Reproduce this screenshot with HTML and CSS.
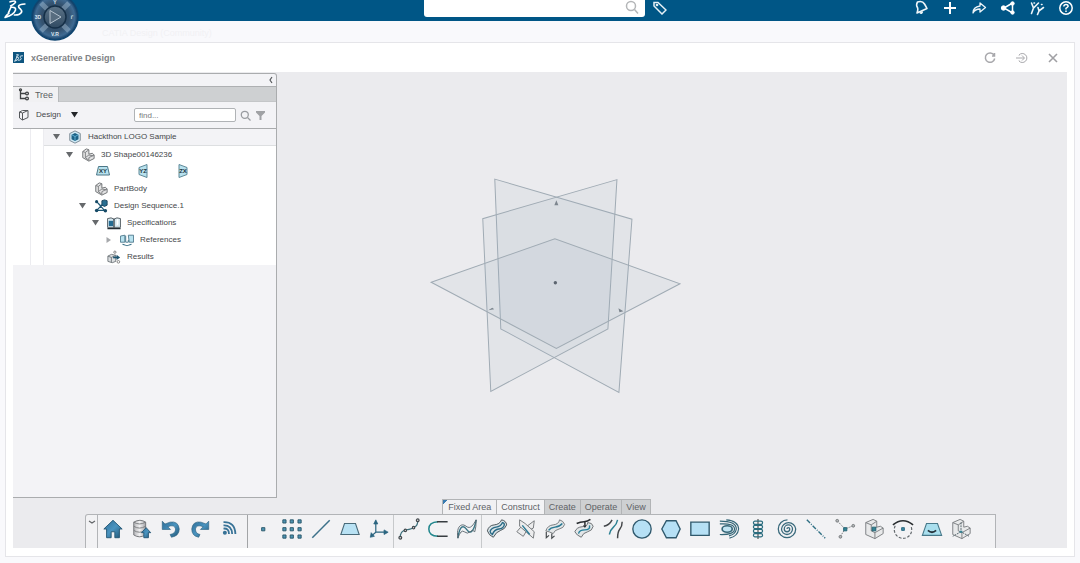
FILE: index.html
```html
<!DOCTYPE html>
<html lang="en">
<head>
<meta charset="utf-8">
<meta name="viewport" content="width=device-width, initial-scale=1">
<title>xGenerative Design</title>
<link rel="stylesheet" href="styles.css">
</head>
<body>
<svg class="defs" aria-hidden="true">
  <defs>
    <linearGradient id="blue" x1="0" y1="0" x2="1" y2="1"><stop offset="0" stop-color="#2f6d96"/><stop offset=".5" stop-color="#4a94c0"/><stop offset="1" stop-color="#1f5474"/></linearGradient>
    <linearGradient id="grey" x1="0" y1="0" x2="1" y2="0"><stop offset="0" stop-color="#b5b5b8"/><stop offset=".5" stop-color="#f2f2f3"/><stop offset="1" stop-color="#a2a2a6"/></linearGradient>
    <radialGradient id="dial" cx=".5" cy=".5" r=".5"><stop offset="0" stop-color="#2f4a64"/><stop offset=".6" stop-color="#34526f"/><stop offset=".85" stop-color="#3f6a92"/><stop offset="1" stop-color="#0f3b63"/></radialGradient>
    <linearGradient id="knob" x1="0" y1="0" x2="0" y2="1"><stop offset="0" stop-color="#5d7488"/><stop offset="1" stop-color="#304a62"/></linearGradient>
    <g id="ds" fill="none" stroke-linecap="round" stroke-linejoin="round">
      <path d="M5.500 1.500q5-1.500 5 .2q-.5 1.500-4.500 3.500"/>
      <path d="M6.500 6l-2.500 5.500M6.500 6.500q4.500-.5 4 2.500q-1.500 4.500-9.500 6.800q1.500-2.500 3.500-4"/>
      <path d="M19 3.500q-5 0-5.800 2q-.2 1.300 1.900 2.800q1.700 1.700.5 3.200q-1.600 2.200-6.100 2"/>
    </g>
    <g id="part">
      <path d="M2 4l4-3 3 1v5l4-1 2 2v4l-6 3-7-4z" fill="#e3e3e4" stroke="#66696c"/>
      <path d="M2 4l3 1v6l4 3M5 5l4-3M5 11l4-3 5 1M9 14v-3l6-3" fill="none" stroke="#77797c"/>
    </g>
    <path id="down" d="M0 0h7L3.500 5.500z"/>
  </defs>
</svg>

<header class="topbar">
  <div class="brand">
    <a class="logo" href="#" aria-label="3DS home"><svg width="22" height="19" viewBox="0 0 20 17" stroke="#fff" stroke-width="1.500"><use href="#ds"/></svg></a>
    <button class="compass" aria-label="Compass">
      <svg width="48" height="48" viewBox="0 0 48 48">
        <circle cx="24" cy="24" r="23" fill="url(#dial)" stroke="#0f4570" stroke-width="1.500"/>
        <path d="M10 10l7 7M38 10l-7 7M10 38l7-7M38 38l-7-7" stroke="#a8c1d6" stroke-width="5" opacity=".45"/>
        <circle cx="24" cy="24" r="11" fill="url(#knob)" stroke="#152f47" stroke-width="1.500"/>
        <path d="M19 17.500v13l11-6.500z" fill="#586d80" stroke="#b5c3cf"/>
        <text x="24" y="11" class="dial-text">Y</text><text x="7" y="26" class="dial-text">3D</text><text x="41" y="26" class="dial-text">i'</text><text x="24" y="43" class="dial-text">V.R</text>
      </svg>
    </button>
  </div>
  <form class="search">
    <input type="search" aria-label="Search">
    <button type="button" aria-label="Run search"><svg width="14" height="15" viewBox="0 0 14 15" fill="none" stroke="#b4b6b8" stroke-width="1.500"><circle cx="6" cy="6" r="4.500"/><path d="M9.500 9.500l3.500 4"/></svg></button>
  </form>
  <nav class="actions" aria-label="Platform">
    <button class="tag" aria-label="Tags"><svg width="14" height="14" viewBox="0 0 14 14" fill="none" stroke="#e6f0f6" stroke-width="1.500"><path d="M1 5V1.500h4l8 7.500-4 4z"/><circle cx="4" cy="4" r=".6"/></svg></button>
    <button aria-label="Notifications"><svg width="16" height="16" viewBox="0 0 16 16" fill="none" stroke="#eef5f9" stroke-width="1.600" stroke-linejoin="round"><path d="M4.500 2q5-1.500 7 2T14 8.500L4 13Q5.500 9 4.200 7T4.500 2z"/><path d="M7 12.500q1.500 2 2.500-1" fill="#eef5f9"/></svg></button>
    <button aria-label="Add"><svg width="16" height="16" viewBox="0 0 16 16" stroke="#fff" stroke-width="2"><path d="M8 2v12M2 8h12"/></svg></button>
    <button aria-label="Share"><svg width="16" height="16" viewBox="0 0 16 16" fill="none" stroke="#eef5f9" stroke-width="1.300" stroke-linejoin="round"><path d="M9 6V3l5.500 4.500L9 12V9Q4 9 2 13 2 7 9 6z"/></svg></button>
    <button aria-label="Network"><svg width="16" height="16" viewBox="0 0 16 16" fill="#fff" stroke="#fff"><path d="M12.500 3L4 8l8.500 5z" fill="none" stroke-width="1.500"/><circle cx="3.500" cy="8" r="2.200"/><circle cx="12.500" cy="3.500" r="1.700"/><circle cx="12.500" cy="12.500" r="1.700"/></svg></button>
    <button aria-label="Communities"><svg width="16" height="16" viewBox="0 0 16 16" fill="none" stroke="#eef5f9" stroke-width="1.600" stroke-linecap="round"><path d="M2.500 3l2 5 5-5M4.500 8l-2 5.500M5 3h.5M9 7.500l1 3.500 4.500-3.500M10 11l-1.500 3.500M12.500 4.500h.5"/></svg></button>
    <button aria-label="Help"><svg width="16" height="16" viewBox="0 0 16 16" fill="none" stroke="#fff" stroke-width="1.500"><circle cx="8" cy="8" r="6.200"/><path d="M5.800 6.500Q6 4.500 8 4.500t2.200 1.700Q10 7.200 8 8.300v1.200M8 10.500v1.500"/></svg></button>
  </nav>
</header>

<p class="dashboard">CATIA Design (Community)</p>

<main class="widget">
  <div class="widget-head">
    <span class="app-icon"><svg width="9" height="8" viewBox="0 0 20 17" stroke="#e4f0f7" stroke-width="2"><use href="#ds"/></svg></span>
    <h1>xGenerative Design</h1>
    <div class="window-tools">
      <button aria-label="Refresh"><svg width="14" height="14" viewBox="0 0 14 14" fill="none" stroke="#a8a8ac" stroke-width="1.500"><path d="M11 4A4.700 4.700 0 1 0 11.700 7.500M11.500 2v3H9"/></svg></button>
      <button aria-label="Open"><svg width="14" height="14" viewBox="0 0 14 14" fill="none" stroke="#a8a8ac" stroke-width="1"><path d="M4 4.500V4a4.500 4.500 0 1 1 0 6v-.5M1 7h8M7 4.500L9.500 7 7 9.500"/></svg></button>
      <button aria-label="Close"><svg width="14" height="14" viewBox="0 0 14 14" stroke="#a0a0a4" stroke-width="1.600"><path d="M3 3l8 8M11 3l-8 8"/></svg></button>
    </div>
  </div>

  <div class="workspace">
    <div class="stage">
      <aside class="panel">
        <div class="panel-top"><button aria-label="Collapse panel"><svg width="6" height="8" viewBox="0 0 6 8" fill="none" stroke="#55585b" stroke-width="1.200"><path d="M4 1L2 4l2 3"/></svg></button></div>
        <div class="panel-tabs">
          <button class="panel-tab"><svg width="12" height="13" viewBox="0 0 12 13" fill="none" stroke="#3f4244" stroke-width="1.300"><path d="M2.500 2v8.500h5M2.500 5.500h5"/><circle cx="2.500" cy="1.800" r="1"/><circle cx="9" cy="5.500" r="1.400"/><circle cx="9" cy="10.500" r="1.400"/></svg>Tree</button>
        </div>
        <div class="filter">
          <svg width="12" height="12" viewBox="0 0 12 12" fill="none" stroke="#55585b" stroke-width="1"><path d="M1.500 3L4.500 4v7L1.500 9zM1.500 3l3-1.500H10L4.500 4M4.500 11L10 8.500v-7"/></svg>
          <select aria-label="View"><option>Design</option></select>
          <svg class="caret" width="7" height="6" viewBox="0 0 7 6" fill="#222528"><use href="#down"/></svg>
          <input type="text" placeholder="find..." aria-label="Find">
          <button aria-label="Find in tree"><svg width="11" height="11" viewBox="0 0 11 11" fill="none" stroke="#999ca0" stroke-width="1.300"><circle cx="4.800" cy="4.800" r="3.500"/><path d="M7.500 7.500l3 3"/></svg></button>
          <button aria-label="Filter"><svg width="9" height="9" viewBox="0 0 9 9" fill="#a0a2a5"><path d="M0 0h9v1.500L5.500 5v4h-2V5L0 1.500z"/></svg></button>
        </div>
        <div class="tree">
          <ul class="root">
            <li>
              <div class="row selected"><button class="twist" aria-label="Collapse"><svg viewBox="0 0 7 6"><use href="#down"/></svg></button><svg class="node" viewBox="0 0 16 16"><path d="M8 1l6 3v8l-6 3-6-3V4z" fill="#cfe9f5" stroke="#72818b"/><path d="M8 3.500l4 2v5l-4 2-4-2v-5z" fill="#1d6286"/><path d="M4.500 5.500L8 7.500l3.500-2M8 7.500v4.500" fill="none" stroke="#67b8dc"/></svg><span>Hackthon LOGO Sample</span></div>
              <ul>
                <li>
                  <div class="row"><button class="twist" aria-label="Collapse"><svg viewBox="0 0 7 6"><use href="#down"/></svg></button><svg class="node" viewBox="0 0 16 16"><use href="#part"/></svg><span>3D Shape00146236</span></div>
                  <div class="planes">
                    <svg width="14" height="16" viewBox="0 0 14 16"><path d="M2.500 3.500h9L13.500 12H.5z" fill="#b7e1ee" stroke="#4c7787"/><text x="7" y="10">XY</text></svg>
                    <svg width="14" height="16" viewBox="0 0 14 16"><path d="M3 4.500l8-3v13l-8-3z" fill="#b7e1ee" stroke="#5e8998"/><text x="7" y="10">YZ</text></svg>
                    <svg width="14" height="16" viewBox="0 0 14 16"><path d="M3 1.500l8 3v7l-8 3z" fill="#b7e1ee" stroke="#5e8998"/><text x="7" y="10">ZX</text></svg>
                  </div>
                  <ul>
                    <li><div class="row"><span class="twist"></span><svg class="node" viewBox="0 0 16 16"><use href="#part"/></svg><span>PartBody</span></div></li>
                    <li>
                      <div class="row"><button class="twist" aria-label="Collapse"><svg viewBox="0 0 7 6"><use href="#down"/></svg></button><svg class="node" viewBox="0 0 16 16"><path d="M3 3l5 5-5 5h9zM8 8l3-3" fill="none" stroke="#1e5876" stroke-width="1.300"/><path d="M9 2l3-1 3 1v5l-3 1.500L9 7z" fill="#2a6f92" stroke="#174059"/><g fill="#174a66"><circle cx="3" cy="3" r="1.800"/><circle cx="3" cy="13" r="2"/><circle cx="13" cy="13.500" r="2"/></g></svg><span>Design Sequence.1</span></div>
                      <ul>
                        <li>
                          <div class="row"><button class="twist" aria-label="Collapse"><svg viewBox="0 0 7 6"><use href="#down"/></svg></button><svg class="node" viewBox="0 0 16 16"><path d="M.5 3Q5 1 8 3.500 11 1 15.500 3v10H.500z" fill="#d4e6ee" stroke="#4a5258"/><path d="M2 5.500h5v6H2z" fill="#256b91"/><path d="M8 3.500V13M.5 14.500h15" stroke="#222b32" stroke-width="1.300"/><path d="M11 4v7l2-1.500V3" fill="#fff"/></svg><span>Specifications</span></div>
                          <ul>
                            <li><div class="row"><button class="twist closed" aria-label="Expand"><svg viewBox="0 0 7 6"><path d="M1.500 0v6L6 3z"/></svg></button><svg class="node" viewBox="0 0 16 16"><path d="M.5 3.500l5-1v8h-5zM9.500 2.500h6v8h-5z" fill="#b8e2ef" stroke="#497588"/><path d="M6.500 3v7.500h3V8M3 13q5 3 10 0l-2 .2M3 13l2 .2" fill="none" stroke="#397087"/></svg><span>References</span></div></li>
                          </ul>
                        </li>
                        <li><div class="row"><span class="twist"></span><svg class="node" viewBox="0 0 16 16"><path d="M1 7l4-2 5 1v7l-4 1.500L1 13z" fill="#dcdfe1" stroke="#6d7478"/><path d="M1 7l4 1.500L10 6M5 8.500V14" fill="none" stroke="#6d7478"/><path d="M7 8.500h5" stroke="#1d546f" stroke-width="2"/><path d="M11 5.500l4 3-4 3z" fill="#1d546f"/><circle cx="9" cy="2.500" r="1.300" fill="#fff" stroke="#777"/><circle cx="13" cy="13.500" r="1.500" fill="#fff" stroke="#777"/></svg><span>Results</span></div></li>
                      </ul>
                    </li>
                  </ul>
                </li>
              </ul>
            </li>
          </ul>
        </div>
      </aside>

      <div class="canvas">
        <svg viewBox="277 72 789 425" role="img" aria-label="Reference planes">
          <g class="plane">
            <path d="M494.500 179L631.500 219 618.500 392 500.500 328.500z"/>
            <path d="M616.500 179.500L482.500 218.500 490.500 391 607.500 328.500z"/>
            <path d="M431 282L554.500 238.500 679.500 283.500 556 348z"/>
          </g>
          <g fill="#7d868f"><circle cx="555" cy="282.500" r="1.700" fill="#5c6570"/><path d="M556 200l2 5h-4zM488 310l4-2.500 2 1.500zM618 308l5 3-4 1z"/></g>
        </svg>
      </div>
    </div>

    <div class="dock">
      <div class="tabs" role="tablist">
        <button role="tab" class="tab pinned">Fixed Area</button>
        <button role="tab" class="tab active" aria-selected="true">Construct</button>
        <button role="tab" class="tab">Create</button>
        <button role="tab" class="tab">Operate</button>
        <button role="tab" class="tab">View</button>
      </div>
      <div class="toolbar" role="toolbar" aria-label="Construct">
        <button class="grip" aria-label="Collapse toolbar"><svg width="8" height="5" viewBox="0 0 8 5" fill="none" stroke="#64676a" stroke-width="1.200"><path d="M1 1l3 2 3-2"/></svg></button>
        <div class="group fixed">
          <button aria-label="Home"><svg viewBox="0 0 24 24"><path d="M2 12L12 2.500 22 12h-3v9.500h-5V15h-4v6.500H5V12z" fill="url(#blue)" stroke="#235674"/></svg></button>
          <button aria-label="Save"><svg viewBox="0 0 24 24"><path d="M3 4.500v14q6 4 13 0v-14q-6-4-13 0z" fill="url(#grey)" stroke="#707275"/><path d="M3 4.500q6 4 13 0M3 9q6 4 13 0M3 13.500q6 4 13 0" fill="none" stroke="#77797c"/><path d="M16.500 10.500l5 5.500h-2.500v5.500h-5V16h-2.500z" fill="url(#blue)" stroke="#245775"/></svg></button>
          <button aria-label="Undo"><svg viewBox="0 0 24 24"><path d="M2.500 3.500v9h9L8.500 9.500Q16 6.500 17 12q0 5-6 6l1.500 3Q21 19.500 21 12 20 3 11 4.500L5.500 6.500z" fill="url(#blue)" stroke="#2d617f" stroke-width=".7"/></svg></button>
          <button aria-label="Redo"><svg viewBox="0 0 24 24"><path d="M21.500 3.500v9h-9l3-3Q8 6.500 7 12q0 5 5 6l-1.500 3Q3 19.500 3 12 4 3 13 4.500l5.500 2z" fill="url(#blue)" stroke="#2d617f" stroke-width=".7"/></svg></button>
          <button aria-label="Update feed"><svg viewBox="0 0 24 24" fill="none" stroke="#387397" stroke-width="2"><circle cx="7.500" cy="16" r="1.200" fill="#387397"/><path d="M6 11.500q6-.5 6 6M6 8q9-.5 9.500 9.500M6 4.500Q18.500 4 19 17.500"/></svg></button>
        </div>
        <div class="group">
          <button aria-label="Point"><svg viewBox="0 0 24 24"><path d="M10.500 10.500h3.500v3.500h-3.500z" fill="#4e94b3" stroke="#285568"/></svg></button>
          <button aria-label="Point grid"><svg viewBox="0 0 24 24" fill="#4e94b3" stroke="#285568"><path d="M2 2h3.500v3.500H2zM10 2h3.500v3.500H10zM18.500 2H22v3.500h-3.500zM2 10.500h3.500V14H2zM10 10.500h3.500V14H10zM18.500 10.500H22V14h-3.500zM2 18.500h3.500V22H2zM10 18.500h3.500V22H10zM18.500 18.500H22V22h-3.500z"/></svg></button>
          <button aria-label="Line"><svg viewBox="0 0 24 24"><path d="M2.500 21.500l19-19" stroke="#3c7189" stroke-width="1.600"/></svg></button>
          <button aria-label="Plane"><svg viewBox="0 0 24 24"><path d="M6 6h12l4 12H2z" fill="#b9e2f4" stroke="#496a79" stroke-width="1.200"/></svg></button>
          <button aria-label="Axis system"><svg viewBox="0 0 24 24" fill="#2a647f" stroke="#2a647f" stroke-width="1.300"><path d="M8.500 15.500V5M8.500 15.500h10M8.500 15.500l-4 3.500" fill="none"/><path d="M8.500 2l2.200 4.500H6.300zM22 15.500L17.500 13v5zM2.500 21l1-5 3.500 4z" stroke-width=".8"/></svg></button>
        </div>
        <div class="group">
          <button aria-label="Curve"><svg viewBox="0 0 24 24" fill="none" stroke="#40727e" stroke-width="1.300"><path d="M2.500 22Q2 14 9 13t7.500-3q5 0 5-7"/><g fill="#d7dadc" stroke="#44494d"><circle cx="2.500" cy="21.500" r="1.500"/><circle cx="8" cy="13.500" r="1.300"/><circle cx="17" cy="10.500" r="1.300"/><circle cx="21.500" cy="2.500" r="1.500"/></g></svg></button>
          <button aria-label="Connect"><svg viewBox="0 0 24 24" fill="none"><path d="M12 4Q2 4.500 2 12t10 8" stroke="#24888e" stroke-width="1.700"/><path d="M11 4h11.500M11 20h11.500" stroke="#383d41" stroke-width="1.600"/></svg></button>
          <button aria-label="Blend"><svg viewBox="0 0 24 24" fill="none"><path d="M2 22C4 8 8 7 12 13s8 0 10-11" stroke="#397686" stroke-width="1.500"/><path d="M2 22C0 9 6 5 11 9s8-2 11-7q0 8-1.500 13-2-3-5 0T9 15t-7 7" stroke="#59676f"/></svg></button>
        </div>
        <div class="group">
          <button aria-label="Offset curve"><svg viewBox="0 0 24 24" fill="none" stroke="#404a50"><path d="M1.500 14Q3 8 9 7.500T17 2q5 1 5.500 5.500Q21 12 16 13.500T8 21q-5-2-6.500-7z" fill="#d9e3e7"/><path d="M4.500 14.500Q6 10.500 11 10t7-5q2 0 2 2.500-1 4-6 4.500t-7 6q-2-1-2.500-3.500z" stroke="#286985" stroke-width="1.500"/></svg></button>
          <button aria-label="Intersection"><svg viewBox="0 0 24 24" fill="#ececed" stroke="#707477"><path d="M2 15l6-7 5 1 8-6-1 8-8 4-3 5z"/><path d="M5 2l6 4 10 9-1 7-8-7-7-6z"/><path d="M8 8l8 10" stroke="#2a7993" stroke-width="1.600"/></svg></button>
          <button aria-label="Projection"><svg viewBox="0 0 24 24" fill="none" stroke="#707477"><path d="M2 14Q4 8 10 7.500T17 2q4 1 5.500 5-1 4-6 5T10 17q-4-2-8-3z" fill="#e4e7e8"/><path d="M5 13.500q2-3 7-3.500t8-4" stroke="#2a7993" stroke-width="1.500"/><path d="M2.500 15v6.500l3-2.500M8.500 17v5l3-2.500" stroke="#44494c" stroke-width="1.300"/></svg></button>
          <button aria-label="Project on surface"><svg viewBox="0 0 24 24" fill="none" stroke="#65696c"><path d="M2 15Q4 10 10 9.500T16 5q5 0 6 4-1 5-6 6t-7 6q-5-2-7-6z" fill="#e1e5e7"/><path d="M6 17q1-4 7-4t5-5" stroke="#26809a" stroke-width="1.500"/><path d="M4 6q4-2 8-2t7-2.500M13 4v4" stroke="#292d30" stroke-width="1.600"/><path d="M11 8h4l-2 3z" fill="#292d30" stroke="none"/></svg></button>
          <button aria-label="Parallel curves"><svg viewBox="0 0 24 24" fill="none" stroke-width="1.600"><path d="M2 9q6-1 9-7M17 22q0-7 2.500-10T22 4" stroke="#44474a"/><path d="M8 18q1-5 4.500-8T17 2" stroke="#2d8193"/></svg></button>
          <button aria-label="Circle"><svg viewBox="0 0 24 24"><circle cx="12" cy="12" r="10" fill="#b6e0f5" stroke="#30596d" stroke-width="1.500"/></svg></button>
          <button aria-label="Polygon"><svg viewBox="0 0 24 24"><path d="M7 3h10.500l4.500 9-4.500 9.500H7L2 12z" fill="#b6e0f5" stroke="#30596d" stroke-width="1.500"/></svg></button>
          <button aria-label="Rectangle"><svg viewBox="0 0 24 24"><path d="M2 4.500h20v14.500H2z" fill="#b6e0f5" stroke="#30596d" stroke-width="1.500"/></svg></button>
          <button aria-label="Conic"><svg viewBox="0 0 24 24" fill="none" stroke="#356778" stroke-width="1.300"><ellipse cx="10" cy="12" rx="5.500" ry="3.500" fill="#c2e5f3" stroke-width="1.800"/><path d="M2 6.500q16-1 16 5.500T2 18M2 3.500q18 0 18 8.500-1 6-8 7.500M9 2q13 1 13.500 10-1 8-10 10"/></svg></button>
          <button aria-label="Helix"><svg viewBox="0 0 24 24" fill="none" stroke="#2a6c7e" stroke-width="1.300"><path d="M12 1v22" stroke="#555"/><rect x="7" y="3.500" width="10" height="3.500" rx="1.700"/><rect x="7" y="8" width="10" height="3.500" rx="1.700"/><rect x="7" y="12.500" width="10" height="3.500" rx="1.700"/><rect x="7" y="17" width="10" height="3.500" rx="1.700"/></svg></button>
          <button aria-label="Spiral"><svg viewBox="0 0 24 24" fill="none" stroke="#3a6a7c" stroke-width="1.400"><path d="M12 12a1.500 1.500 0 0 1 3 0a3 3 0 0 1-6 0a4.500 4.500 0 0 1 9 0a6 6 0 0 1-12 0a7.800 7.800 0 0 1 15.500 0a9.500 9.500 0 0 1-19 0a10 10 0 0 1 10-10"/></svg></button>
          <button aria-label="Axis"><svg viewBox="0 0 24 24"><path d="M2 2l20 20" stroke="#2f6f83" stroke-width="1.500" stroke-dasharray="5 1.500 1 1.500"/></svg></button>
          <button aria-label="Mid point"><svg viewBox="0 0 24 24" fill="#b6b9bb" stroke="#73777a"><path d="M12 12L3.500 3M12 12l9-3.500M12 12l-5 8" stroke-dasharray="1.500 1"/><circle cx="3.500" cy="3" r="1.500"/><circle cx="21" cy="8.500" r="1.500"/><circle cx="7" cy="20.500" r="1.500"/><path d="M10.500 10.500h3.500v3.500h-3.500z" fill="#348394" stroke="#226171"/></svg></button>
          <button aria-label="Body centre"><svg viewBox="0 0 24 24" fill="none" stroke="#787c7f"><path d="M3 5l8-3.500 4 2V10l4-1 3 2v6l-9 5.500L3 18z" fill="#e8e9ea"/><path d="M3 5l6 2.500V14l4 2v6.500M9 7.500l6-4M13 16l9-5M9 14l6-4"/><path d="M10 10h4v4h-4z" fill="#348394" stroke="#226171"/></svg></button>
          <button aria-label="Circle centre"><svg viewBox="0 0 24 24" fill="none"><path d="M3.500 8.500a9.500 9.500 0 1 0 17 0" stroke="#646a6e" stroke-width="1.300" stroke-dasharray="3 1.800"/><path d="M1 7.500q11-9 22 0" stroke="#292d30" stroke-width="1.800"/><path d="M10.500 10.500h3v3h-3z" fill="#408ca7" stroke="#2a677e"/></svg></button>
          <button aria-label="Tangent plane"><svg viewBox="0 0 24 24"><path d="M6 6h12l4.500 13h-21z" fill="#a9dfee" stroke="#48798a" stroke-width="1.200"/><path d="M7.500 13.500q4.500 4 9 0" fill="none" stroke="#26343d" stroke-width="2"/></svg></button>
          <button aria-label="Body axis"><svg viewBox="0 0 24 24" fill="none" stroke="#787c7f"><path d="M3 5l8-3.500 4 2V10l4-1 3 2v6l-9 5.500L3 18z" fill="#e8e9ea"/><path d="M3 5l6 2.500V14l4 2v6.500M9 7.500l6-4M13 16l9-5"/><path d="M12 5v10l9 5M12 15l-9 5" stroke="#4a5c65" stroke-dasharray="2 1"/><path d="M10.500 14h3v2h-3z" fill="#348394" stroke="none"/></svg></button>
        </div>
      </div>
    </div>
  </div>
</main>
</body>
</html>
```
FILE: styles.css
```css
* { box-sizing: border-box; }
body {
  margin: 0;
  min-height: 100vh;
  display: flex;
  flex-direction: column;
  background: #f9f9fc;
  color: #44474a;
  font: 8px/12px "Liberation Sans", Arial, sans-serif;
}
button, input, select { font: inherit; color: inherit; margin: 0; }
button {
  display: flex;
  align-items: center;
  justify-content: center;
  padding: 0;
  border: 0;
  background: none;
}
svg { display: block; flex: none; }
ul { list-style: none; margin: 0; padding: 0; }
.defs { position: absolute; width: 0; height: 0; }

/* top bar */
.topbar {
  display: grid;
  grid-template-columns: minmax(0, 424fr) 221px minmax(0, 435fr);
  height: 21px;
  background: #005686;
}
.brand { position: relative; padding-left: 4px; }
.logo { display: block; width: 22px; }
.compass { position: absolute; left: 31px; top: -7px; z-index: 2; border-radius: 50%; }
.dial-text { font-size: 5px; font-weight: bold; fill: #dbe6ee; text-anchor: middle; }
.search {
  display: flex;
  height: 17px;
  padding-right: 6px;
  background: #fff;
  border-radius: 0 0 3px 3px;
}
.search input { flex: 1; min-width: 0; border: 0; padding: 0 6px; background: none; appearance: none; outline: 0; }
.search button { height: 15px; }
.actions { display: flex; height: 15px; }
.actions button { width: 29px; }
.actions .tag { margin-right: auto; }

.dashboard { margin: 0; height: 21px; padding-left: 102px; font-size: 9px; line-height: 25px; color: #f1f1f4; }

/* widget */
.widget {
  flex: 1;
  display: flex;
  flex-direction: column;
  margin: 0 5px 8px;
  padding: 0 7px 8px;
  border: 1px solid #e5e5e9;
  background: #fff;
}
.widget-head { display: flex; align-items: center; height: 29px; }
.app-icon { display: grid; place-items: center; width: 11px; height: 11px; background: #0f5680; }
h1 { margin: 0 auto 0 7px; font-size: 9px; line-height: 12px; color: #808286; }
.window-tools { display: flex; }
.window-tools button { width: 32px; height: 20px; }
.window-tools button:last-child { width: 29px; }

.workspace { flex: 1; display: flex; flex-direction: column; background: #ebebee; }
.stage { flex: 1; display: flex; min-height: 0; }
.canvas { flex: 1; min-width: 0; display: flex; }
.canvas svg { flex: 1; width: 100%; min-width: 0; }
.plane path { fill: #9fb0bc; fill-opacity: .11; stroke: #a0abb4; stroke-width: 1; }

/* tree panel */
.panel {
  width: 264px;
  display: flex;
  flex-direction: column;
  margin-top: 1px;
  background: #f3f3f6;
  border: solid #aaacae;
  border-width: 1px 1px 1px 0;
  border-radius: 0 3px 0 0;
}
.panel-top { display: flex; justify-content: flex-end; height: 13px; padding-right: 2px; border-bottom: 1px solid #aeb0b2; }
.panel-tabs { display: flex; height: 15px; background: #ced0d2; border-bottom: 1px solid #c4c6c8; }
.panel-tab { width: 46px; height: 15px; gap: 5px; background: #f1f1f3; font-size: 9px; color: #5c5f62; border-right: 1px solid #b8babc; }
.filter { display: flex; align-items: center; height: 27px; padding: 0 8px 0 5px; border-bottom: 1px solid #a9abad; }
.filter select { width: 32px; margin-left: 6px; padding: 0; border: 0; background: none; appearance: none; }
.filter .caret { margin-left: 3px; }
.filter input { width: 102px; height: 14px; margin-left: auto; padding: 0 4px; border: 1px solid #b0b3b6; border-radius: 2px; background: #fff; }
.filter input::placeholder { color: #77797c; opacity: 1; }
.filter button { width: 15px; height: 14px; margin-left: 2px; }
.filter button:last-child { margin-left: 0; }
.tree { padding-left: 17px; background: #fff; }
.root { padding-left: 12px; border-left: 1px solid #ececf0; }
.root > li { border-left: 1px solid #ececf0; }
.root ul { padding-left: 13px; }
.row { display: flex; align-items: center; height: 17px; padding-left: 6px; white-space: nowrap; }
.row.selected { background: #f3f3f6; border-bottom: 1px solid #dddfe1; }
.twist { width: 13px; margin-right: 5px; fill: #66696c; }
.twist svg { width: 7px; height: 6px; }
.twist.closed { fill: #a6a8ab; }
.node { width: 14px; height: 14px; margin-right: 6px; }
.planes { display: flex; gap: 26px; height: 17px; padding-left: 39px; }
.planes text { font-size: 6px; font-weight: bold; fill: #1c3440; text-anchor: middle; }

/* dock */
.dock { padding: 1px 71px 0 72px; }
.tabs { display: flex; height: 15px; justify-content: center; padding-left: 12px; }
.tab {
  height: 15px;
  padding: 0 4px;
  border: 1px solid #b2b4b6;
  border-width: 1px 1px 0 0;
  background: #ced0d2;
  font-size: 9px;
  color: #5e6265;
}
.tab.pinned { padding: 0 5px; border-left-width: 1px; background: linear-gradient(135deg, #397bb0 3px, #f1f1f3 3px); }
.tab.active { background: #f3f3f5; }
.toolbar {
  display: flex;
  height: 34px;
  background: #f2f2f4;
  border: solid #b2b4b7;
  border-width: 1px 1px 0;
  border-radius: 3px 0 0 0;
  overflow: hidden;
}
.grip { width: 12px; align-items: flex-start; padding-top: 5px; border-right: 1px solid #b2b4b7; }
.group { display: flex; }
.group + .group { border-left: 1px solid #c7c9cb; }
.group.fixed { padding-right: 4px; }
.group.fixed + .group { border-color: #a2a4a6; }
.group button { width: 29px; height: 29px; }
.group svg { width: 22px; height: 22px; }
```
